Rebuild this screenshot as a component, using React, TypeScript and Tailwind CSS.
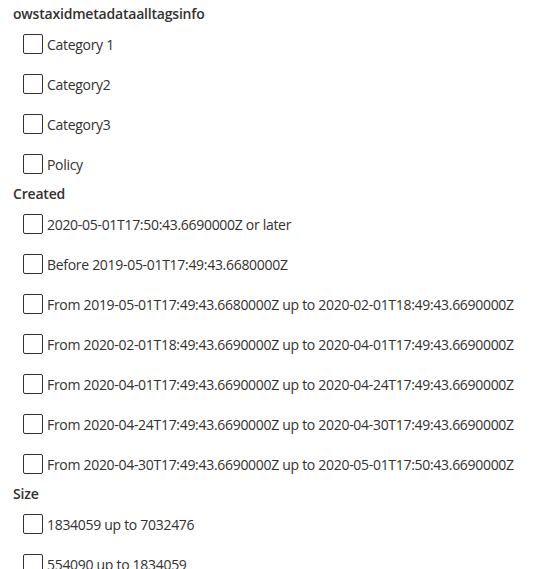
const SECTIONS: { title: string; items: string[] }[] = [
  {
    title: "owstaxidmetadataalltagsinfo",
    items: ["Category 1", "Category2", "Category3", "Policy"],
  },
  {
    title: "Created",
    items: [
      "2020-05-01T17:50:43.6690000Z or later",
      "Before 2019-05-01T17:49:43.6680000Z",
      "From 2019-05-01T17:49:43.6680000Z up to 2020-02-01T18:49:43.6690000Z",
      "From 2020-02-01T18:49:43.6690000Z up to 2020-04-01T17:49:43.6690000Z",
      "From 2020-04-01T17:49:43.6690000Z up to 2020-04-24T17:49:43.6690000Z",
      "From 2020-04-24T17:49:43.6690000Z up to 2020-04-30T17:49:43.6690000Z",
      "From 2020-04-30T17:49:43.6690000Z up to 2020-05-01T17:50:43.6690000Z",
    ],
  },
  {
    title: "Size",
    items: ["1834059 up to 7032476", "554090 up to 1834059"],
  },
];

function FilterCheckbox({ label }: { label: string }) {
  return (
    <label className="flex h-10 items-center pl-[23px] cursor-pointer">
      <input type="checkbox" className="peer sr-only" />
      <span className="mr-[4px] h-5 w-5 shrink-0 rounded-[2px] border border-[#323130] bg-white" />
      <span className="h-5 whitespace-nowrap pt-[2px] text-[14px] leading-[18px] tracking-[-0.3px] text-[#323130]">
        {label}
      </span>
    </label>
  );
}

export default function App() {
  return (
    <div
      className="min-h-screen bg-white pt-1 text-[#323130]"
      style={{ fontFamily: '"Open Sans", "Noto Sans", sans-serif' }}
    >
      {SECTIONS.map((section) => (
        <div key={section.title}>
          <p className="h-5 pl-[13px] text-[14px] font-semibold leading-5 tracking-[-0.2px]">{section.title}</p>
          {section.items.map((item) => (
            <FilterCheckbox key={item} label={item} />
          ))}
        </div>
      ))}
    </div>
  );
}
